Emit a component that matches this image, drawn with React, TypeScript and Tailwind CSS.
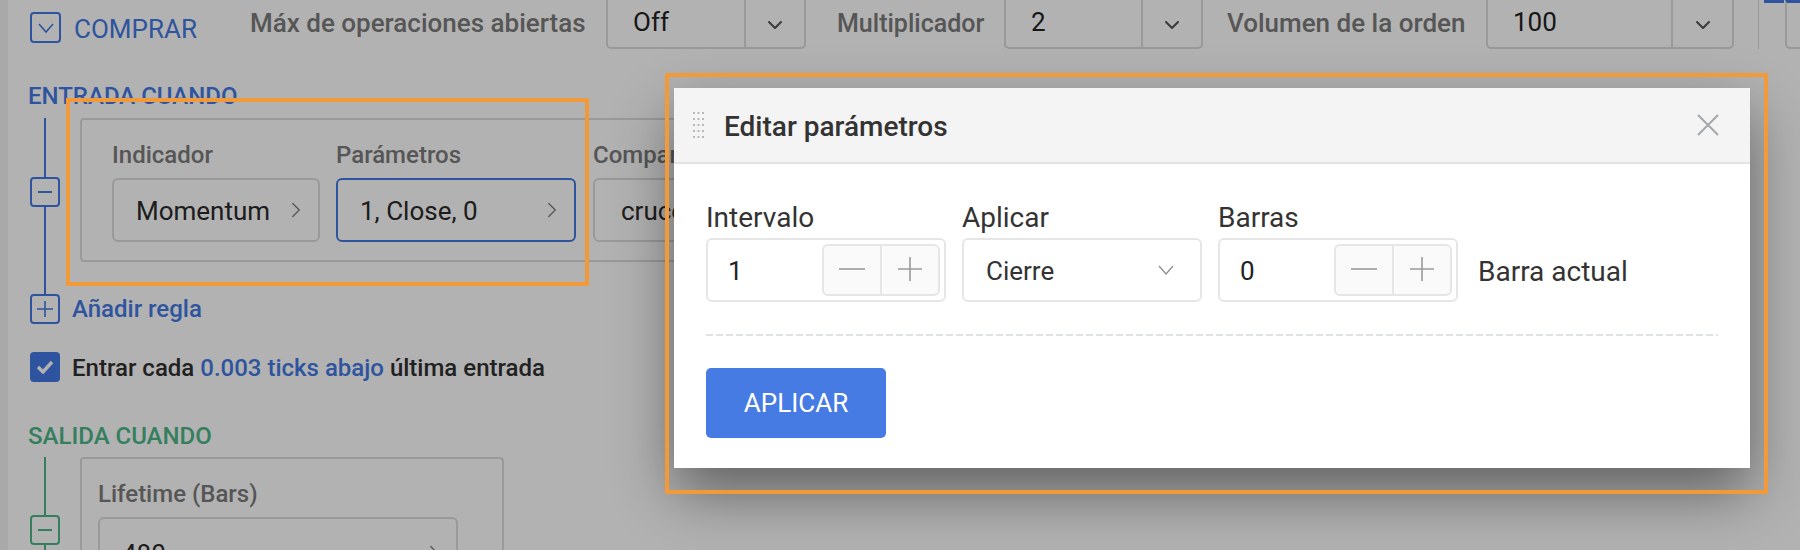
import { ChevronDown, ChevronRight } from 'lucide-react';

const blue = 'text-[#4479e4]';

function TopSelect({ value, width, divider }: { value: string; width: string; divider: string }) {
    return (
        <div className={`-mt-[14px] flex h-[63px] shrink-0 rounded-b-[5px] border-2 border-[#dcdcdc] ${width}`}>
            <div className="flex flex-1 items-center pt-[10px] pl-[25px] text-[26px] text-[#222]">{value}</div>
            <div className={`flex items-center justify-center border-l-2 border-[#dcdcdc] pt-[14px] ${divider}`}>
                <ChevronDown size={24} strokeWidth={2} className="text-[#555]" />
            </div>
        </div>
    );
}

function TopLabel({ children, className }: { children: string; className: string }) {
    return <span className={`mt-[4px] shrink-0 whitespace-nowrap font-medium text-[#7b7b7b] ${className}`}>{children}</span>;
}

function SelectBox({ value, className, chevron }: { value: string; className: string; chevron: string }) {
    return (
        <div className={`flex items-center justify-between rounded-[6px] border-2 pr-[9px] pl-[22px] text-[26px] text-[#2a2a2a] ${className}`}>
            <span className="pt-[3px]">{value}</span>
            <ChevronRight size={26} strokeWidth={1.2} className={chevron} />
        </div>
    );
}

function RailBox({ color, children }: { color: string; children: React.ReactNode }) {
    return (
        <div className={`flex h-[30px] w-[30px] shrink-0 items-center justify-center rounded-[4px] border-2 ${color}`}>
            {children}
        </div>
    );
}

function Stepper() {
    return (
        <div className="flex h-[52px] w-[118px] rounded-[6px] border-2 border-[#e6e6e6] bg-[#fafafa]">
            <div className="flex w-[58px] items-center justify-center border-r-2 border-[#e6e6e6] pb-[3px]">
                <svg width="26" height="2" viewBox="0 0 26 2">
                    <path d="M0 1h26" stroke="#9a9a9a" strokeWidth="1.6" />
                </svg>
            </div>
            <div className="flex flex-1 items-center justify-center pb-[3px]">
                <svg width="24" height="24" viewBox="0 0 24 24">
                    <path d="M0 12h24M12 0v24" stroke="#9a9a9a" strokeWidth="1.6" />
                </svg>
            </div>
        </div>
    );
}

function NumberField({ label, value }: { label: string; value: string }) {
    return (
        <div className="w-[240px]">
            <div className="mb-[4px] h-[32px] text-[28px] leading-[32px] text-[#333]">{label}</div>
            <div className="flex h-[64px] items-center justify-between rounded-[6px] border-2 border-[#e6e6e6] pr-[4px] pl-[20px] text-[26px] text-[#222]">
                <span className="pt-[3px]">{value}</span>
                <Stepper />
            </div>
        </div>
    );
}

const handleDots: number[][] = [0, 1, 2, 3, 4].flatMap((row) => [0, 1, 2].map((col) => [col, row]));

export default function App() {
    return (
        <div className="relative flex h-[550px] w-[1800px] overflow-hidden bg-white font-['Roboto',sans-serif]">
            <div className="w-2 shrink-0 bg-[#f2f2f2]" />

            <main className="flex-1 pl-[22px]">
                <div className="flex h-[49px] items-start">
                    <div className="mt-3 flex h-[31px] w-[31px] shrink-0 items-center justify-center rounded-[4px] border-2 border-[#4479e4]">
                        <svg width="18" height="12" viewBox="0 0 18 12" fill="none">
                            <path d="M2 2l7 8 7-8" stroke="#4479e4" strokeWidth="1.6" />
                        </svg>
                    </div>
                    <span className={`mt-[13px] ml-[13px] w-[176px] shrink-0 text-[26px] leading-[32px] ${blue}`}>COMPRAR</span>
                    <div className="w-[356px] shrink-0">
                        <TopLabel className="block text-[26px]">Máx de operaciones abiertas</TopLabel>
                    </div>
                    <TopSelect value="Off" width="w-[200px]" divider="w-[60px]" />
                    <div className="ml-[31px] w-[167px] shrink-0">
                        <TopLabel className="block text-[25px] leading-[39px]">Multiplicador</TopLabel>
                    </div>
                    <TopSelect value="2" width="w-[199px]" divider="w-[60px]" />
                    <div className="ml-[24px] w-[259px] shrink-0">
                        <TopLabel className="block text-[26px]">Volumen de la orden</TopLabel>
                    </div>
                    <TopSelect value="100" width="w-[248px]" divider="w-[61px]" />
                    <div className="ml-[24px] h-[49px] w-px bg-[#dcdcdc]" />
                    <div className="ml-[5px] flex h-[49px] flex-1">
                        <div className="h-[3px] w-[20px] bg-[#4479e4]" />
                        <div className="h-[3px] w-[1px]" />
                        <div className="-mr-[20px] h-[49px] flex-1 rounded-bl-[5px] border-b-2 border-l-2 border-[#dcdcdc] border-t-[3px] border-t-[#4479e4]" />
                    </div>
                </div>

                <h2 className={`mt-[35px] -ml-[2px] h-[24px] text-[24px] leading-[24px] font-medium ${blue}`}>ENTRADA CUANDO</h2>

                <div className="mt-[10px] flex h-[176px]">
                    <div className="flex w-[30px] flex-col items-center">
                        <div className="h-[59px] w-[2px] bg-[#4479e4]" />
                        <RailBox color="border-[#4479e4]">
                            <svg width="14" height="2" viewBox="0 0 14 2">
                                <path d="M0 1h14" stroke="#4479e4" strokeWidth="2" />
                            </svg>
                        </RailBox>
                        <div className="w-[2px] flex-1 bg-[#4479e4]" />
                    </div>
                    <div className="ml-[20px] flex h-[144px] w-[700px] rounded-[4px] border-2 border-[#dcdcdc] pl-[30px]">
                        <div className="w-[208px]">
                            <div className="mt-[21px] mb-[9px] h-[28px] text-[24px] leading-[28px] font-medium text-[#7b7b7b]">Indicador</div>
                            <SelectBox value="Momentum" className="h-[64px] border-[#dcdcdc]" chevron="text-[#7b7b7b]" />
                        </div>
                        <div className="ml-[16px] w-[240px]">
                            <div className="mt-[21px] mb-[9px] h-[28px] text-[24px] leading-[28px] font-medium text-[#7b7b7b]">Parámetros</div>
                            <SelectBox value="1, Close, 0" className="h-[64px] border-[#4479e4]" chevron="text-[#7b7b7b]" />
                        </div>
                        <div className="ml-[17px] flex-1">
                            <div className="mt-[21px] mb-[9px] h-[28px] text-[24px] leading-[28px] font-medium text-[#7b7b7b]">Comparador</div>
                            <SelectBox value="cruce" className="h-[64px] border-[#dcdcdc] pl-[26px]" chevron="text-[#7b7b7b]" />
                        </div>
                    </div>
                </div>

                <div className="flex h-[30px] items-center">
                    <RailBox color="border-[#4479e4]">
                        <svg width="16" height="16" viewBox="0 0 16 16">
                            <path d="M0 8h16M8 0v16" stroke="#4479e4" strokeWidth="1.6" />
                        </svg>
                    </RailBox>
                    <span className={`ml-[12px] text-[24px] font-medium ${blue}`}>Añadir regla</span>
                </div>

                <div className="mt-[28px] flex h-[30px] items-center">
                    <div className="flex h-[30px] w-[30px] items-center justify-center rounded-[4px] bg-[#4479e4]">
                        <svg width="18" height="14" viewBox="0 0 18 14" fill="none">
                            <path d="M2 7l5 5 9-10" stroke="#fff" strokeWidth="3.4" />
                        </svg>
                    </div>
                    <span className="mt-[1px] ml-[12px] text-[24px] font-medium text-[#303030]">
                        Entrar cada <span className={blue}>0.003 ticks abajo</span> última entrada
                    </span>
                </div>

                <h2 className="mt-[42px] -ml-[2px] h-[24px] text-[24px] leading-[24px] font-medium text-[#4cb788]">SALIDA CUANDO</h2>

                <div className="mt-[9px] flex">
                    <div className="flex w-[30px] flex-col items-center">
                        <div className="h-[58px] w-[2px] bg-[#4cb788]" />
                        <RailBox color="border-[#4cb788]">
                            <svg width="14" height="2" viewBox="0 0 14 2">
                                <path d="M0 1h14" stroke="#4cb788" strokeWidth="2" />
                            </svg>
                        </RailBox>
                        <div className="h-[40px] w-[2px] bg-[#4cb788]" />
                    </div>
                    <div className="ml-[20px] h-[160px] w-[424px] rounded-[4px] border-2 border-[#dcdcdc] px-[16px]">
                        <div className="mt-[21px] mb-[9px] h-[28px] text-[24px] leading-[28px] font-medium text-[#7b7b7b]">Lifetime (Bars)</div>
                        <SelectBox value="480" className="h-[72px] w-[360px] border-[#dcdcdc]" chevron="text-[#7b7b7b]" />
                    </div>
                </div>
            </main>

            {/* page dim */}
            <div className="absolute inset-0 bg-black/30" />

            {/* dialog */}
            <div className="absolute top-[88px] left-[674px] h-[380px] w-[1076px] bg-white shadow-[0_25px_56px_rgba(0,0,0,0.45)]">
                <div className="flex h-[76px] items-center border-b-2 border-[#e3e3e3] bg-[#f4f4f4]">
                    <svg width="11" height="26" viewBox="0 0 11 26" className="ml-[19px]">
                        {handleDots.map(([col, row]) => (
                            <rect key={`${col}-${row}`} x={col * 4.5} y={row * 6} width="2" height="2" fill="#b9b9b9" />
                        ))}
                    </svg>
                    <span className="ml-[20px] flex-1 pt-[3px] text-[28px] font-medium text-[#333]">Editar parámetros</span>
                    <svg width="22" height="22" viewBox="0 0 22 22" className="mr-[31px]">
                        <path d="M1 1l20 20M21 1L1 21" stroke="#a3a8ad" strokeWidth="2" />
                    </svg>
                </div>
                <div className="px-[32px]">
                    <div className="mt-[38px] flex gap-[16px]">
                        <NumberField label="Intervalo" value="1" />
                        <div className="w-[240px]">
                            <div className="mb-[4px] h-[32px] text-[28px] leading-[32px] text-[#333]">Aplicar</div>
                            <div className="flex h-[64px] items-center justify-between rounded-[6px] border-2 border-[#e6e6e6] pr-[26px] pl-[22px] text-[26px] text-[#333]">
                                <span className="pt-[3px]">Cierre</span>
                                <svg width="16" height="10" viewBox="0 0 16 10" fill="none">
                                    <path d="M1 1l7 8 7-8" stroke="#8d8d8d" strokeWidth="1.2" />
                                </svg>
                            </div>
                        </div>
                        <NumberField label="Barras" value="0" />
                        <div className="mt-[36px] ml-[4px] flex h-[64px] items-center pt-[3px] text-[28px] text-[#333]">Barra actual</div>
                    </div>
                    <div className="mt-[32px] h-[2px] bg-[repeating-linear-gradient(90deg,#dfe3e6_0_7px,transparent_7px_10px)]" />
                    <button className="mt-[32px] flex h-[70px] w-[180px] items-center justify-center rounded-[5px] bg-[#477be4] pt-[1px] text-[26px] text-white">
                        APLICAR
                    </button>
                </div>
            </div>

            {/* annotation frames */}
            <div className="absolute top-[98px] left-[66px] h-[188px] w-[523px] border-4 border-[#f2993a]" />
            <div className="absolute top-[73px] left-[665px] h-[421px] w-[1103px] border-4 border-[#f2993a]" />
        </div>
    );
}
